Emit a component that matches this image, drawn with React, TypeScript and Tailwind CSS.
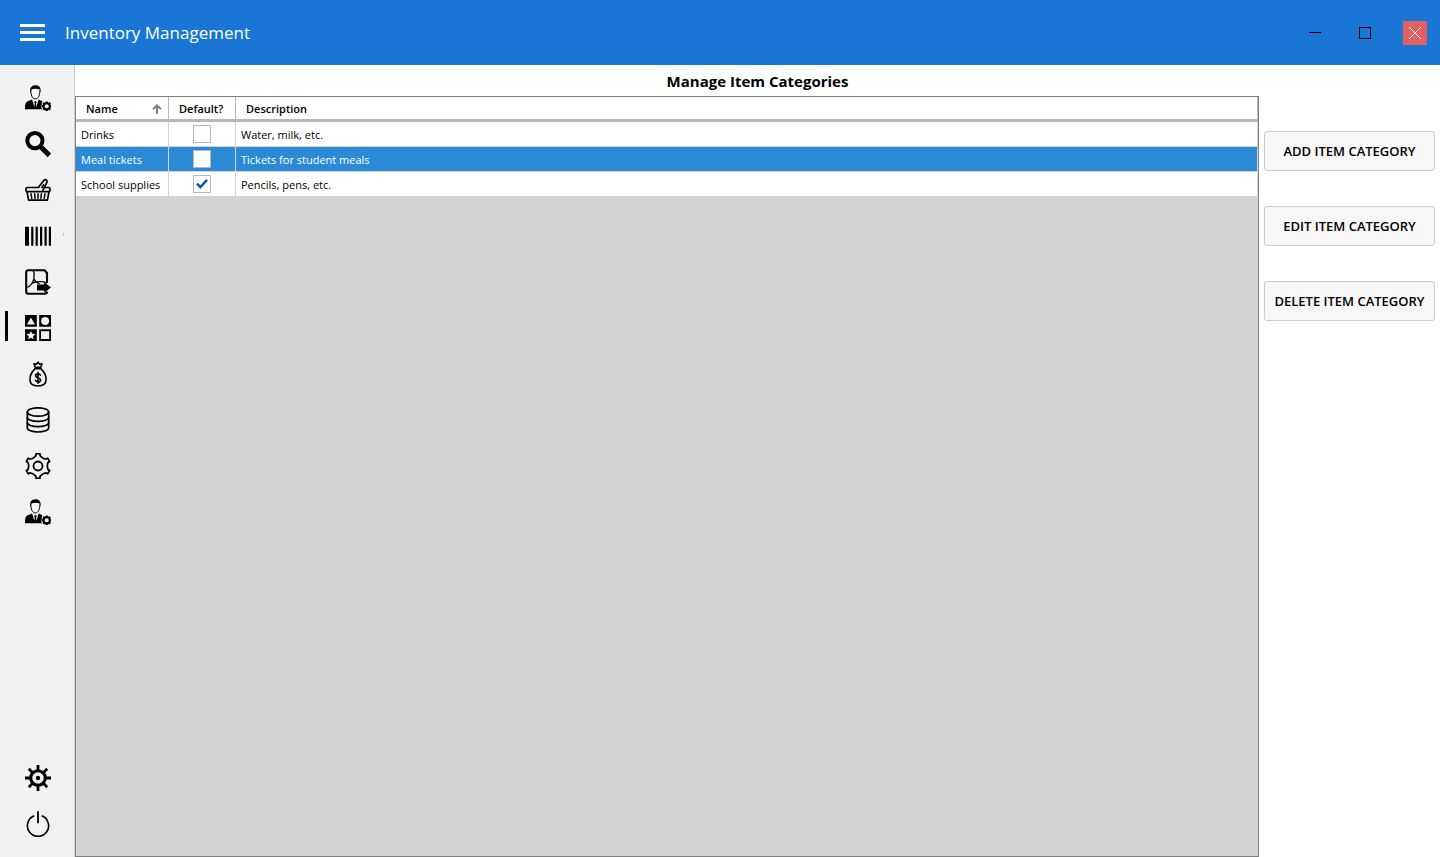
import { useState, type ReactNode } from 'react';

/** Closed outline of a cog: each ring entry is [radius, angle offset in degrees] from the tooth's axis. */
function cogPath(cx: number, cy: number, teeth: number, ring: [number, number][]) {
  const points: string[] = [];
  for (let i = 0; i < teeth; i++) {
    for (const [r, offset] of ring) {
      const a = (((i * 360) / teeth - 90 + offset) * Math.PI) / 180;
      points.push(`${(cx + r * Math.cos(a)).toFixed(2)} ${(cy + r * Math.sin(a)).toFixed(2)}`);
    }
  }
  return `M${points.join('L')}Z`;
}

function Icon({ children }: { children: ReactNode }) {
  return (
    <svg viewBox="0 0 26 26" className="size-[26px]" fill="none" stroke="#000" aria-hidden="true">
      {children}
    </svg>
  );
}

function UserCogIcon() {
  return (
    <Icon>
      <path d="M6 5.500C5.600 9.800 7.300 13.900 10.300 13.900s4.800-4.100 4.400-8.400" strokeWidth="1" fill="#f8f8f8" />
      <path d="M5.300 7.500C4.500 3 6.400.4 10.400.3c4 0 6 2.600 5.100 7.200l-.9-3C12 3.400 8.500 3.600 6.500 4.400Z" fill="#000" stroke="none" />
      <path d="M0 24.200c0-5.500.6-7.200 3.200-8.200l3.900-1.500 2.200 7.200.5-3.200-.8-1.500 1.400-1 1.400 1-.8 1.500.5 3.200 2.100-7.200 3.900 1.700c-1 1.200-.9 2.100-.5 3.200-.9.900-.9 3.200.1 4.800Z" fill="#000" stroke="none" />
      <path d={cogPath(21.7, 21.3, 8, [[5, -12], [5, 12], [4.1, 17], [4.1, 28]])} fill="#000" stroke="none" />
      <circle cx="21.700" cy="21.300" r="2" fill="#f1f1f1" stroke="none" />
    </Icon>
  );
}

function SearchIcon() {
  return (
    <Icon>
      <circle cx="9.900" cy="9.600" r="7.600" strokeWidth="4" />
      <path d="M15 15l9.400 9.400" strokeWidth="5" />
    </Icon>
  );
}

function BasketIcon() {
  return (
    <Icon>
      <g strokeWidth="1.700" strokeLinejoin="round" strokeLinecap="round">
        <path d="M13.500 10.200l5.300-6.800c1.400-1.600 4-.2 3.200 1.800l-4 8" />
        <path d="M17 10.500l1.600-2.600" />
        <path d="M13.500 10.500H2.200C.5 10.500.5 14.600 2.200 14.600h21.600c1.700 0 1.700-4.100 0-4.100h-4.300" />
        <path d="M2 14.800l1.600 8.400h18.800L24 14.800" />
        <path d="M6 16.800l.8 4.500M9.600 16.800l.5 4.500M13 16.800v4.500M16.400 16.800l-.5 4.500M20 16.800l-.8 4.500" strokeWidth="1.500" />
      </g>
    </Icon>
  );
}

function BarcodeIcon() {
  return (
    <Icon>
      <path d="M0 3.700h4v19H0zM6.200 3.700h2.200v19H6.200zM10.600 3.700h2.200v19h-2.200zM15 3.700h2.200v19H15zM19.500 3.700h2.200v19h-2.200zM23.800 3.700H26v19h-2.200z" fill="#000" stroke="none" />
    </Icon>
  );
}

function ExportPdfIcon() {
  return (
    <Icon>
      <path d="M22 14V4L19.500 1.200H3.200C1.800 1.200 1.200 2 1.200 3.200v19.400c0 1.500.8 2.200 2.200 2.200h16.400c1.500 0 2.200-.8 2.200-2.200" strokeWidth="2.100" />
      <path d="M8 2c2.300 1.500.6 4.500.9 7.400.9 3 3.200 4.700 5.700 5.400M9.300 9.500C8.200 13 6.500 15.600 4.700 17c-1.500 1-2.300 1.500-3.200 1.300M6.200 14.600c3-1.600 6.800-2.300 10.200-1.900 2.200.2 4.200.7 5.400 1.500" strokeWidth="1.300" />
      <path d="M12 15.500h7.200v-2.300L26 18.500l-6.800 5.200v-2.300H12Z" fill="#000" stroke="none" />
    </Icon>
  );
}

function CategoriesIcon() {
  return (
    <Icon>
      <path d="M0 0h11.800v11.800H0zM14.200 0H26v11.800H14.200zM0 14.200h11.800V26H0zM14.200 14.200H26V26H14.200z" fill="#000" stroke="none" />
      <g fill="#f1f1f1" stroke="none">
        <path d="M5.900 2.600l4 7h-8z" />
        <circle cx="20.100" cy="5.900" r="4" />
        <path d="M5.900 15.900l1.300 2.900 3.200.3-2.400 2.100.7 3.100-2.800-1.600-2.800 1.600.7-3.100-2.400-2.100 3.200-.3z" />
        <path d="M16 16.200h8.200v7.800H16z" />
      </g>
    </Icon>
  );
}

function MoneyBagIcon() {
  return (
    <Icon>
      <g strokeWidth="1.600" strokeLinejoin="round" strokeLinecap="round">
        <path d="M10.300 6.300L8.900 2.700l2.500.5L13 1.200l1.600 2 2.500-.5-1.400 3.600Z" />
        <path d="M10 7.800C7 10.600 4.900 14.500 4.900 18.300c0 4.500 3.100 6.700 8.100 6.700s8.100-2.200 8.100-6.700c0-3.800-2.100-7.700-5.100-10.500Z" />
        <path d="M15.400 14.200c-.5-1-1.300-1.400-2.400-1.400-1.400 0-2.400.7-2.400 1.900 0 2.700 5 1.400 5 4.200 0 1.200-1.100 2-2.600 2-1.300 0-2.200-.5-2.600-1.600M13 11.500v10.700" />
      </g>
    </Icon>
  );
}

function DatabaseIcon() {
  return (
    <Icon>
      <g strokeWidth="1.700">
        <ellipse cx="13" cy="5" rx="10.700" ry="4.200" />
        <path d="M2.300 5v15.800c0 2.400 4.800 4.200 10.700 4.200s10.700-1.800 10.700-4.200V5" />
        <path d="M2.300 10.200c0 2.400 4.800 4.200 10.700 4.200s10.700-1.800 10.700-4.200M2.300 15.500c0 2.400 4.800 4.200 10.700 4.200s10.700-1.800 10.700-4.200" />
      </g>
    </Icon>
  );
}

function OutlineGearIcon() {
  return (
    <Icon>
      <path
        d={cogPath(13, 13, 6, [[9.8, -18], [10.6, -11], [12.5, -9], [12.5, 9], [10.6, 11], [9.8, 18], [9.3, 30]])}
        strokeWidth="1.700"
        strokeLinejoin="round"
      />
      <circle cx="13" cy="13" r="4.500" strokeWidth="1.800" />
    </Icon>
  );
}

function SolidGearIcon() {
  return (
    <Icon>
      <circle cx="13" cy="13" r="7.300" strokeWidth="3.100" />
      <circle cx="13" cy="13" r="2.200" fill="#000" stroke="none" />
      <path d="M13 0v5M13 21v5M0 13h5M21 13h5M3.800 3.800l3.600 3.600M18.600 18.600l3.600 3.600M22.200 3.800l-3.600 3.600M7.400 18.600l-3.600 3.600" strokeWidth="2.800" />
    </Icon>
  );
}

function PowerIcon() {
  return (
    <Icon>
      <path d="M8.700 5.100a10.600 10.600 0 1 0 8.600 0" strokeWidth="1.600" strokeLinecap="round" />
      <path d="M13 .3v12" strokeWidth="1.800" />
    </Icon>
  );
}

type NavEntry = { label: string; icon: ReactNode; marker?: boolean };

const mainNav: NavEntry[] = [
  { label: 'Current user', icon: <UserCogIcon /> },
  { label: 'Search', icon: <SearchIcon /> },
  { label: 'Purchases', icon: <BasketIcon /> },
  { label: 'Barcodes', icon: <BarcodeIcon />, marker: true },
  { label: 'Export report', icon: <ExportPdfIcon /> },
  { label: 'Item categories', icon: <CategoriesIcon /> },
  { label: 'Currencies', icon: <MoneyBagIcon /> },
  { label: 'Database', icon: <DatabaseIcon /> },
  { label: 'Options', icon: <OutlineGearIcon /> },
  { label: 'Manage users', icon: <UserCogIcon /> },
];

const footerNav: NavEntry[] = [
  { label: 'Settings', icon: <SolidGearIcon /> },
  { label: 'Log out', icon: <PowerIcon /> },
];

function NavButton({ entry, active, onSelect }: { entry: NavEntry; active: boolean; onSelect: () => void }) {
  return (
    <button
      type="button"
      aria-label={entry.label}
      aria-current={active ? 'page' : undefined}
      onClick={onSelect}
      className="relative flex h-[46px] w-full items-center justify-center pl-0.5"
    >
      {active && <span className="absolute top-1.5 left-[5px] h-[30px] w-[3px] bg-black" />}
      {entry.icon}
      {entry.marker && <span className="absolute top-5 right-[10px] h-[3px] w-px bg-[#c4c4c4]" />}
    </button>
  );
}

const initialRows = [
  { name: 'Drinks', isDefault: false, description: 'Water, milk, etc.' },
  { name: 'Meal tickets', isDefault: false, description: 'Tickets for student meals' },
  { name: 'School supplies', isDefault: true, description: 'Pencils, pens, etc.' },
];

function CategoryTable() {
  const [rows, setRows] = useState(initialRows);
  const [selected, setSelected] = useState(1);
  const textCell = 'border-r border-b border-[#d3d3d3] px-[5px] pt-0.5 pb-0 whitespace-nowrap';

  return (
    <table className="w-full table-fixed border-separate border-spacing-0 bg-white text-[11px] leading-4">
      <colgroup>
        <col className="w-[93px]" />
        <col className="w-[67px]" />
        <col />
      </colgroup>
      <thead>
        <tr className="h-[25px] text-left">
          <th className="border-r border-b-3 border-[#b8b8b8] pt-0.5 pr-1.5 pb-0 pl-2.5 font-semibold" aria-sort="ascending">
            <div className="flex items-center justify-between">
              Name
              <svg viewBox="0 0 10 10" className="size-2.5" fill="none" stroke="#808080" strokeWidth="2" aria-hidden="true">
                <path d="M5 10V1.500M1 5.300L5 1.400l4 3.900" />
              </svg>
            </div>
          </th>
          <th className="border-r border-b-3 border-[#b8b8b8] px-2.5 pt-0.5 pb-0 font-semibold">Default?</th>
          <th className="border-r border-b-3 border-[#b8b8b8] px-2.5 pt-0.5 pb-0 font-semibold">Description</th>
        </tr>
      </thead>
      <tbody>
        {rows.map((row, i) => (
          <tr
            key={row.name}
            onClick={() => setSelected(i)}
            className={i === selected ? 'h-[25px] bg-[#2a8ad6] text-white' : 'h-[25px] bg-white text-black'}
          >
            <td className={textCell}>{row.name}</td>
            <td className="border-r border-b border-[#d3d3d3] p-0">
              <label className="mx-auto grid size-[18px] place-items-center">
                <input
                  type="checkbox"
                  aria-label={`${row.name} is default`}
                  checked={row.isDefault}
                  onChange={() => setRows(rows.map((r, j) => (j === i ? { ...r, isDefault: !r.isDefault } : r)))}
                  className="col-start-1 row-start-1 size-[18px] appearance-none border border-[#b8b8b8] bg-white"
                />
                {row.isDefault && (
                  <svg viewBox="0 0 12 10" className="pointer-events-none col-start-1 row-start-1 h-2.5 w-3" fill="none" stroke="#0a5ca8" strokeWidth="2.600" aria-hidden="true">
                    <path d="M1 4.600l3.400 3.500L11 .9" />
                  </svg>
                )}
              </label>
            </td>
            <td className={textCell}>{row.description}</td>
          </tr>
        ))}
      </tbody>
    </table>
  );
}

const actions = ['Add item category', 'Edit item category', 'Delete item category'];

export default function App() {
  const [page, setPage] = useState('Item categories');

  return (
    <div className="flex h-screen flex-col bg-white font-['Open_Sans','Noto_Sans',sans-serif] text-black">
      <header className="flex h-[65px] shrink-0 items-center bg-[#1976d4] pr-[13px] pl-5 text-white">
        <button type="button" aria-label="Toggle menu" className="flex w-[25px] flex-col gap-1">
          <span className="h-[3px] bg-white" />
          <span className="h-[3px] bg-white" />
          <span className="h-[3px] bg-white" />
        </button>
        <span className="ml-5 text-[17px]">Inventory Management</span>
        <div className="ml-auto flex gap-[26px]">
          <button type="button" aria-label="Minimize" className="grid size-6 place-items-center">
            <span className="h-px w-3 bg-black" />
          </button>
          <button type="button" aria-label="Maximize" className="grid size-6 place-items-center">
            <span className="size-3 border border-black" />
          </button>
          <button type="button" aria-label="Close" className="grid size-6 place-items-center bg-[#e26060]">
            <svg viewBox="0 0 12 12" className="size-3" stroke="#fff" aria-hidden="true">
              <path d="M0 0l12 12M12 0L0 12" />
            </svg>
          </button>
        </div>
      </header>

      <div className="flex min-h-0 flex-1">
        <nav className="flex w-[75px] shrink-0 flex-col justify-between border-r border-[#d3d3d3] bg-[#f1f1f1] py-2.5">
          <div>
            {mainNav.map((entry) => (
              <NavButton key={entry.label} entry={entry} active={entry.label === page} onSelect={() => setPage(entry.label)} />
            ))}
          </div>
          <div>
            {footerNav.map((entry) => (
              <NavButton key={entry.label} entry={entry} active={entry.label === page} onSelect={() => setPage(entry.label)} />
            ))}
          </div>
        </nav>

        <main className="flex min-w-0 flex-1 flex-col">
          <h1 className="h-[31px] shrink-0 text-center text-[15px] leading-8 font-bold">Manage Item Categories</h1>
          <div className="flex min-h-0 flex-1">
            <div className="min-w-0 flex-1 overflow-auto border border-[#808080] bg-[#d3d3d3]">
              <CategoryTable />
            </div>
            <div className="flex w-[181px] shrink-0 flex-col gap-[35px] px-[5px] pt-[35px]">
              {actions.map((action) => (
                <button
                  key={action}
                  type="button"
                  className="h-10 rounded-[3px] border border-[#cccccc] bg-[#f7f7f7] pt-0.5 text-[13px] font-semibold whitespace-nowrap uppercase"
                >
                  {action}
                </button>
              ))}
            </div>
          </div>
        </main>
      </div>
    </div>
  );
}
